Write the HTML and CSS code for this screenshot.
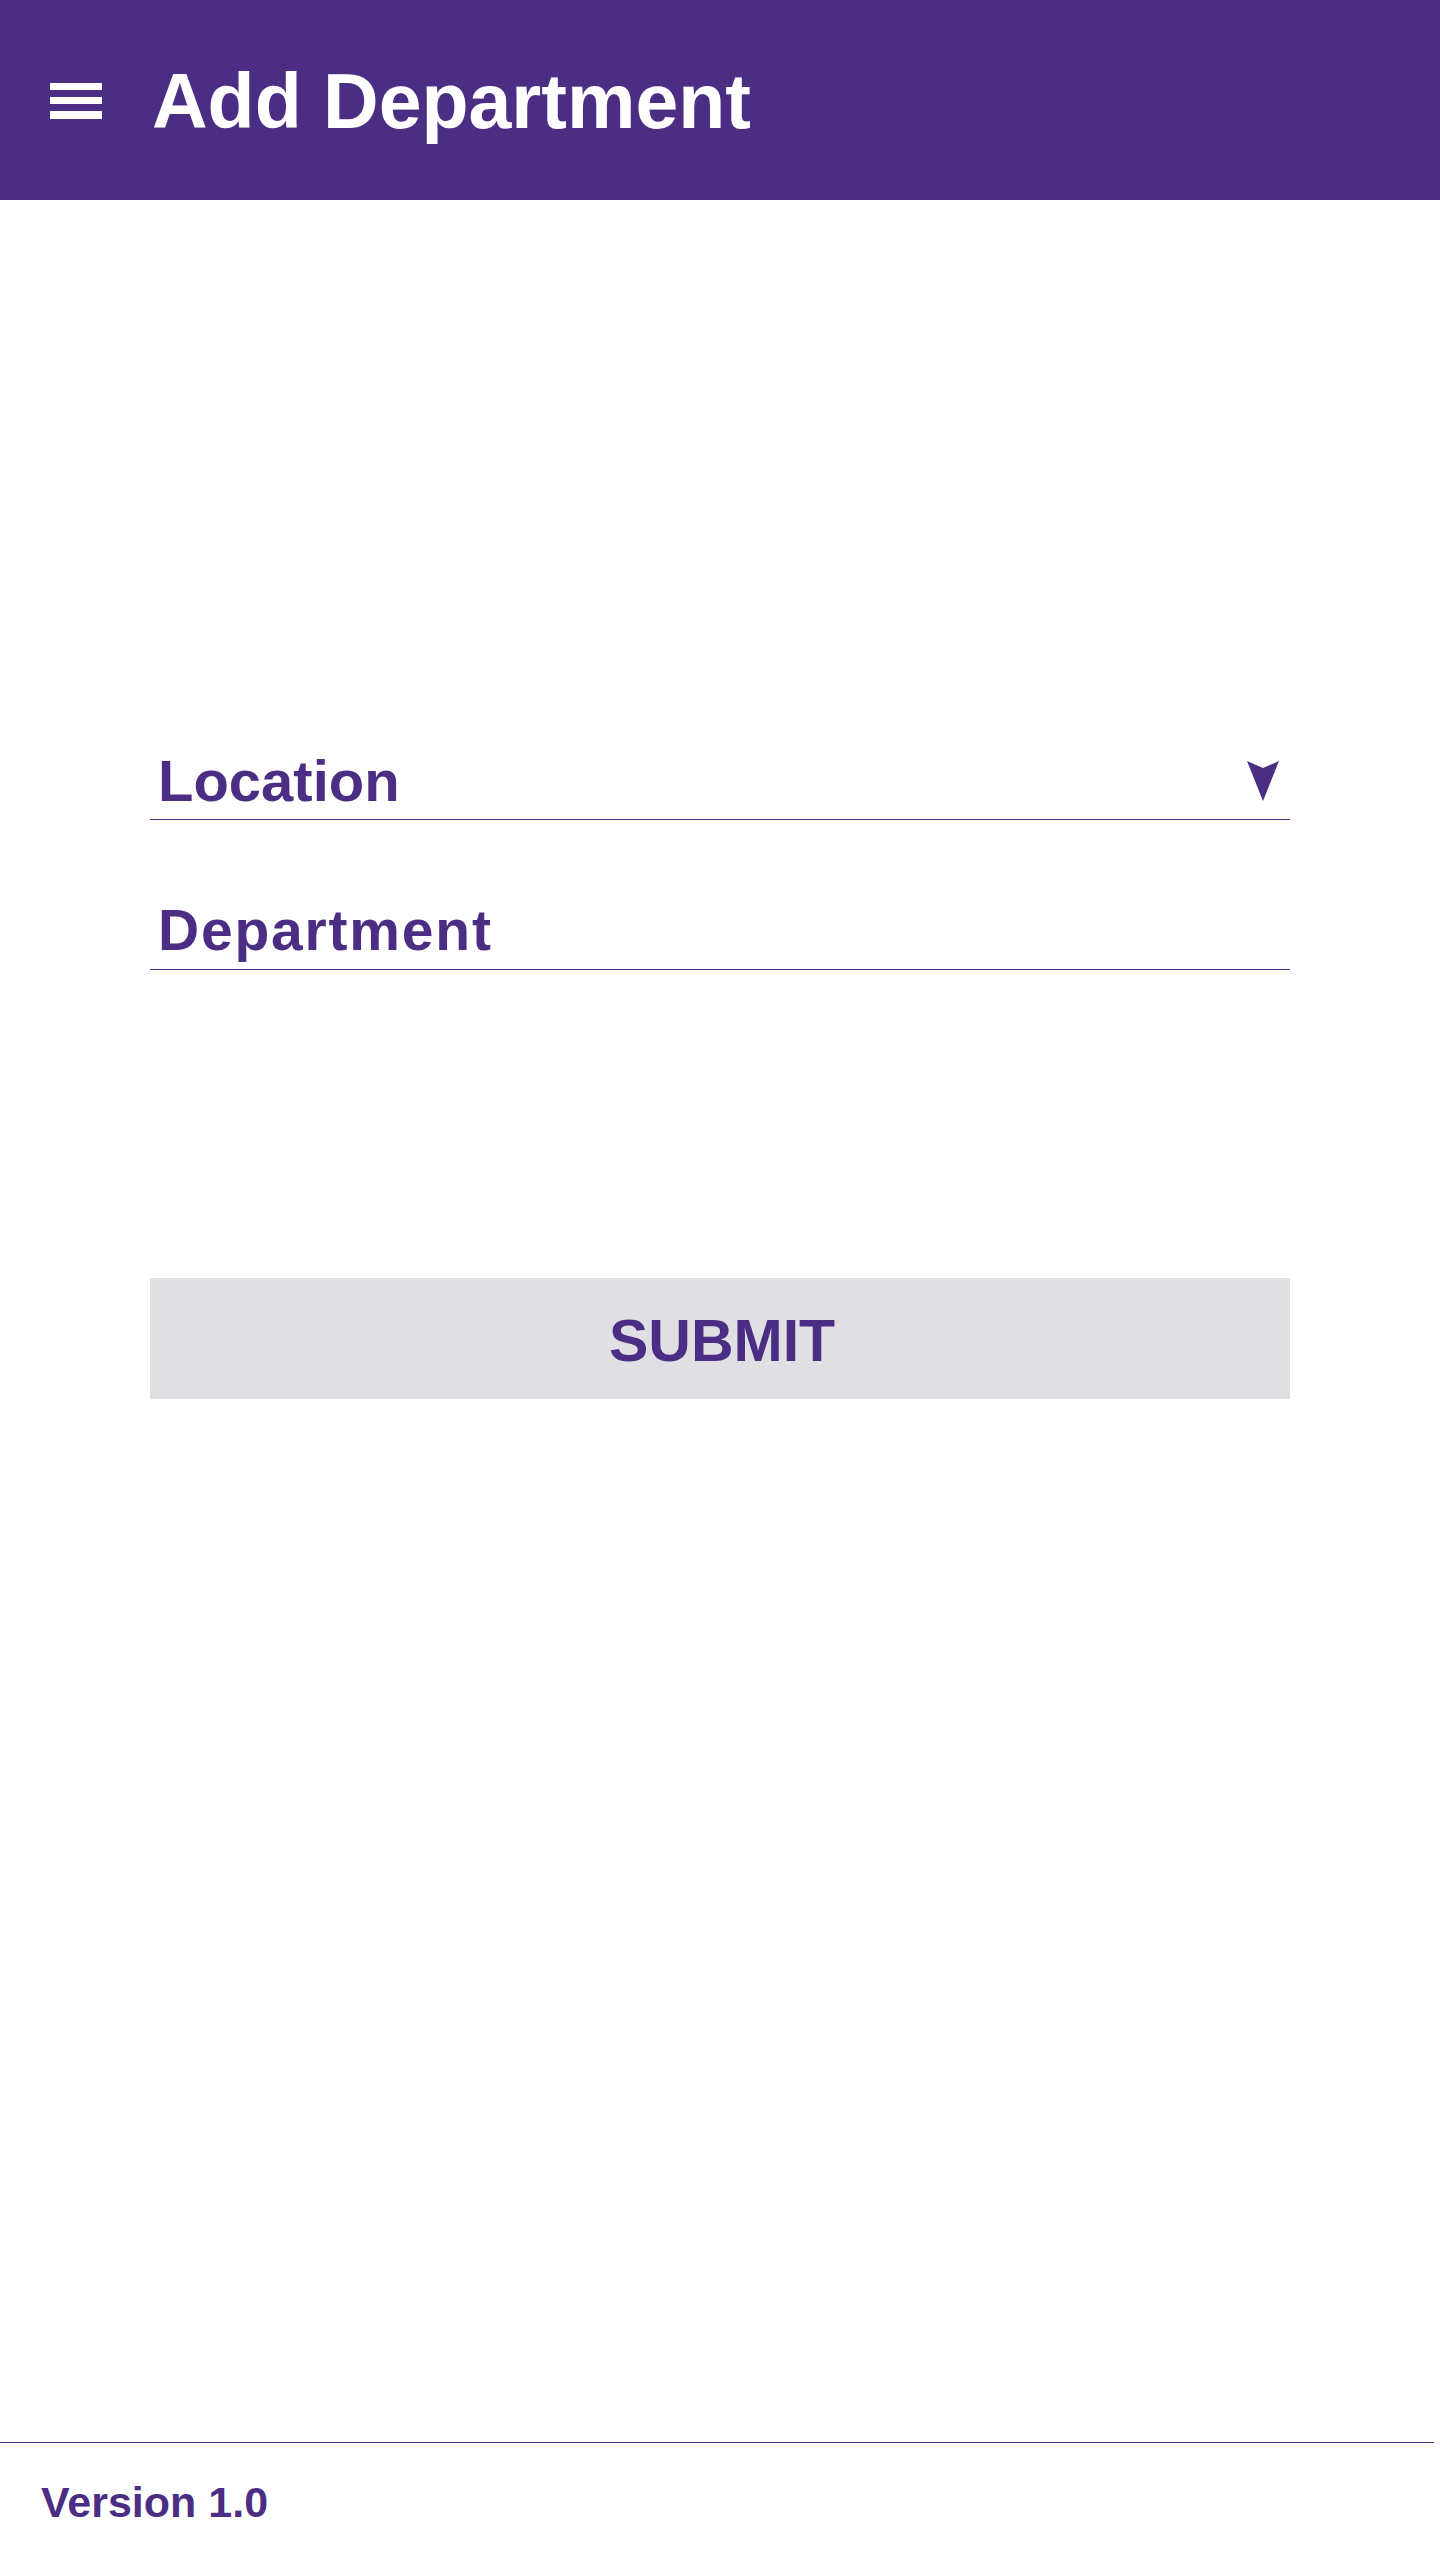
FILE: index.html
```html
<!DOCTYPE html>
<html lang="en">
<head>
<meta charset="utf-8">
<title>Add Department</title>
<link rel="stylesheet" href="styles.css">
</head>
<body>
<div class="page">
  <header class="appbar">
    <svg class="menu-icon" width="52" height="36" viewBox="0 0 52 36" aria-hidden="true">
      <rect x="0" y="0" width="52" height="7" fill="#fff"/>
      <rect x="0" y="14" width="52" height="7" fill="#fff"/>
      <rect x="0" y="28" width="52" height="8" fill="#fff"/>
    </svg>
    <h1 class="title">Add Department</h1>
  </header>
  <main class="content">
    <form class="form">
      <div class="field">
        <span class="field-label">Location</span>
        <svg class="dropdown-arrow" width="32" height="40" viewBox="0 0 32 40" aria-hidden="true">
          <polygon points="0,0 16,7 32,0 16,40" fill="#4b2e83"/>
        </svg>
      </div>
      <div class="field field-second">
        <span class="field-label field-label-wide">Department</span>
      </div>
      <button type="button" class="submit">SUBMIT</button>
    </form>
  </main>
  <footer class="footer">
    <span class="version">Version 1.0</span>
  </footer>
</div>
</body>
</html>
```
FILE: styles.css
```css
html, body {
  margin: 0;
  padding: 0;
  background: #ffffff;
}

body {
  font-family: "Liberation Sans", Arial, sans-serif;
  font-weight: bold;
  color: #4b2e83;
}

.page {
  min-height: 2560px;
  display: flex;
  flex-direction: column;
}

.appbar {
  height: 200px;
  background: #4b2e83;
  display: flex;
  align-items: center;
  padding-left: 50px;
  box-sizing: border-box;
}

.menu-icon {
  display: block;
  flex: none;
  margin-top: 2px;
}

.title {
  margin: 0 0 0 50px;
  padding-top: 2px;
  color: #ffffff;
  font-size: 77px;
  line-height: 88px;
  font-weight: bold;
}

.content {
  flex: 1;
}

.form {
  margin: 547px 0 0 150px;
  width: 1140px;
  display: flex;
  flex-direction: column;
}

.field {
  display: flex;
  align-items: center;
  justify-content: space-between;
  padding: 0 11px 4px 8px;
  border-bottom: 1px solid #4b2e83;
}

.field-second {
  margin-top: 76px;
  padding-bottom: 5px;
}

.field-label {
  font-size: 58px;
  line-height: 68px;
}

.field-label-wide {
  font-size: 57px;
  letter-spacing: 1.8px;
}

.dropdown-arrow {
  display: block;
  flex: none;
}

.submit {
  margin-top: 308px;
  height: 121px;
  width: 100%;
  border: none;
  background: #dfdfe4;
  color: #4b2e83;
  font-family: "Liberation Sans", Arial, sans-serif;
  font-weight: bold;
  font-size: 59px;
  padding: 4px 0 0 4px;
  cursor: pointer;
}

.footer {
  width: 1434px;
  border-top: 1px solid #4b2e83;
  height: 118px;
  box-sizing: border-box;
  display: flex;
  align-items: center;
  padding-left: 41px;
}

.version {
  font-size: 43px;
  line-height: 48px;
}
```
